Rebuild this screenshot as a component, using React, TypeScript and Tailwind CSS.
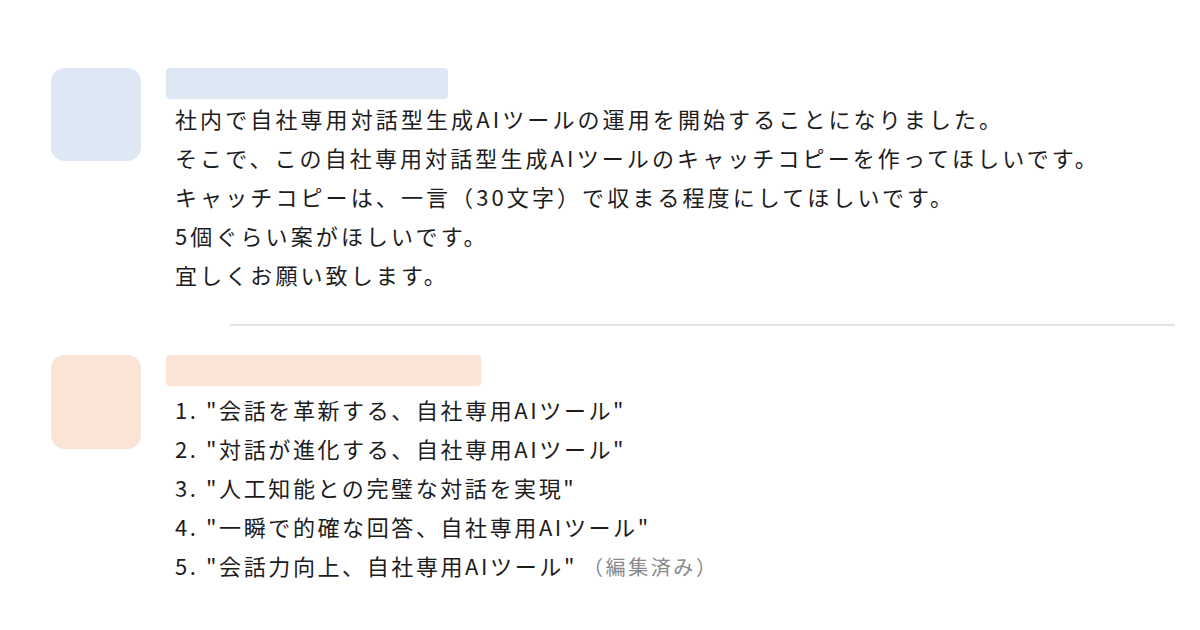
const userLines = [
  '社内で自社専用対話型生成AIツールの運用を開始することになりました。',
  'そこで、この自社専用対話型生成AIツールのキャッチコピーを作ってほしいです。',
  'キャッチコピーは、一言（30文字）で収まる程度にしてほしいです。',
  '5個ぐらい案がほしいです。',
  '宜しくお願い致します。',
]

const answers = [
  '1. "会話を革新する、自社専用AIツール"',
  '2. "対話が進化する、自社専用AIツール"',
  '3. "人工知能との完璧な対話を実現"',
  '4. "一瞬で的確な回答、自社専用AIツール"',
  '5. "会話力向上、自社専用AIツール"',
]

export default function App() {
  return (
    <div
      className="w-[1200px] h-[630px] bg-white overflow-hidden pl-[51px] pt-[68px] text-[#1d1c1d]"
      style={{ fontFamily: '"Noto Sans CJK JP", "Noto Sans", sans-serif' }}
    >
      <div className="flex gap-[25px]">
        <div className="w-[90px] h-[93px] rounded-[14px] bg-[#dde8f4] shrink-0" />
        <div className="flex flex-col">
          <div className="w-[282px] h-[31px] rounded-[4px] bg-[#dde8f4]" />
          <div className="pl-[9px] text-[22px] leading-[39px] tracking-[3.1px]">
            {userLines.map((l) => (
              <div key={l}>{l}</div>
            ))}
          </div>
        </div>
      </div>

      <div className="ml-[179px] mr-[25px] mt-[30px] h-[2px] bg-[#e3e3e3]" />

      <div className="flex gap-[25px] mt-[29px]">
        <div className="w-[90px] h-[94px] rounded-[14px] bg-[#fbe3d6] shrink-0" />
        <div className="flex flex-col">
          <div className="w-[315px] h-[31px] rounded-[4px] bg-[#fbe3d6]" />
          <div className="pl-[9px] pt-[4px] text-[22px] leading-[39px] tracking-[2.6px]">
            {answers.map((a, i) => (
              <div key={a}>
                {a}
                {i === answers.length - 1 && (
                  <span className="ml-[6px] text-[20px] text-[#8a8a8a]">（編集済み）</span>
                )}
              </div>
            ))}
          </div>
        </div>
      </div>
    </div>
  )
}
